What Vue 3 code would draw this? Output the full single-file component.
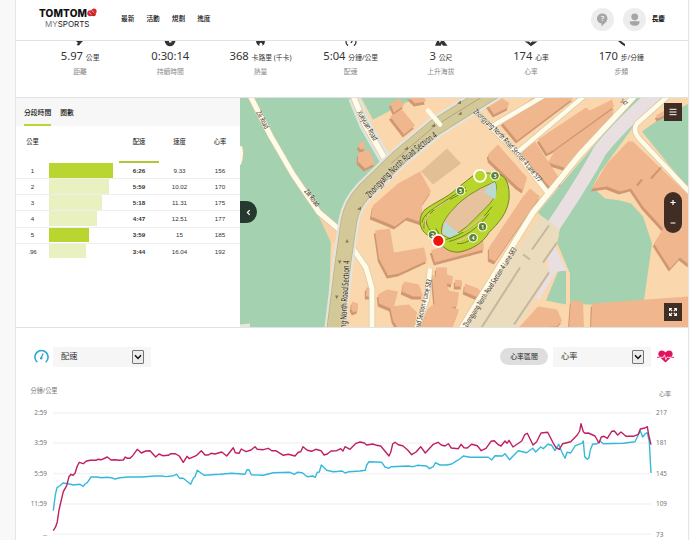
<template>
  <div class="page">
    <div class="sheet">
      <!-- Top bar -->
      <header class="topbar">
        <div class="brand">
          <div class="brand-name">
            <span>TOMTOM</span>
            <svg width="10" height="10" viewBox="0 0 10 10">
              <circle cx="3.3" cy="5.2" r="3" fill="#d92b2e" />
              <circle cx="7" cy="3.2" r="2.7" fill="#d92b2e" />
              <circle cx="6.8" cy="6" r="2.2" fill="#c41f24" />
              <path d="M2.3 4.3 L4.5 6.4 M5 2.6 L7.6 5.2" stroke="#f6c9c9" stroke-width=".8" />
            </svg>
          </div>
          <div class="brand-sub"><span>MY</span>SPORTS</div>
        </div>
        <nav class="menu">
          <a v-for="item in menu" :key="item">{{ item }}</a>
        </nav>
        <div class="account">
          <span class="round">
            <svg width="23" height="23" viewBox="0 0 23 23">
              <path d="M11.5 5.5 a5 5 0 0 1 3.8 8.3 L10.5 18.6 V15.6 A5 5 0 0 1 11.5 5.5z" fill="#a5a5a5" />
              <text x="11.5" y="13.3" text-anchor="middle" font-size="7.5" font-weight="700" fill="#eee">?</text>
            </svg>
          </span>
          <span class="round second">
            <svg width="23" height="23" viewBox="0 0 23 23">
              <circle cx="11.7" cy="8.8" r="3.4" fill="#a5a5a5" />
              <path d="M6.6 13.6 Q11.7 12.2 16.8 13.6 Q16.5 17.8 11.7 17.8 Q6.9 17.8 6.6 13.6z" fill="#a5a5a5" />
            </svg>
          </span>
          <b>長慶</b>
        </div>
      </header>

      <!-- Activity totals -->
      <section class="stats">
        <div v-for="s in stats" :key="s.label + s.value" class="stat">
          <svg width="14" height="6" viewBox="0 0 14 6">
            <path :d="s.icon" :fill="s.line ? 'none' : '#333'" :stroke="s.line ? '#333' : 'none'" stroke-width="1.3" />
          </svg>
          <div class="value">{{ s.value }} <small>{{ s.unit }}</small></div>
          <div class="label">{{ s.label }}</div>
        </div>
      </section>

      <section class="middle">
        <!-- Splits -->
        <div class="splits">
          <div class="tabs">
            <span class="tab active">分段時間</span>
            <span class="tab">圈數</span>
          </div>
          <div class="row head">
            <span class="km">公里</span>
            <span></span>
            <span class="sorted">配速</span>
            <span>速度</span>
            <span>心率</span>
          </div>
          <div v-for="r in splits" :key="r.km" class="row">
            <span>{{ r.km }}</span>
            <span class="track"><i :class="{ strong: r.strong }" :style="{ width: r.width + 'px' }"></i></span>
            <span class="pace">{{ r.pace }}</span>
            <span>{{ r.speed }}</span>
            <span>{{ r.heart }}</span>
          </div>
        </div>

        <!-- Map -->
        <div class="map">
          <svg class="map-art" width="449" height="230" viewBox="240 97.5 449 230">
            <rect x="240" y="97" width="449" height="231" fill="#fbd7ae" />
            <g fill="#a4d1b0">
              <path d="M240 97 H352 L387 160 L356 191 L342 211 L340 224 L331 240 L328 328 H240z" />
              <path d="M361 97 H416 L373 119z" />
              <path d="M634 97 H668 L632 128 L600 172 L565 241 L538 212 Z" />
              <path d="M642 131 L663 116 L689 103 V189z" />
              <path d="M568 205 L592 186 L605 198 L620 200 L631 203 L643 216 L652 243 L643 307 L570 303 L570 273 L557 242z" />
              <path d="M558 271 L566 270 L566 304 L546 300z" />
            </g>
            <path d="M317 212 L338 228 L336 242 L331 242z" fill="#fbd0a5" />
            <path d="M240 324 l10 -1 v5 h-10z" fill="#e6e8dc" />

            <!-- Railway and station -->
            <path d="M659 90 Q618 127 600 150 Q584 180 553 226" fill="none" stroke="#e9dfe1" stroke-width="14" />
            <path d="M546 220 L558 228 L554 244 L567 270 L556 271 L539 300 L535 296 L548 266z" fill="#e9dfe1" />
            <path d="M541 215 L560 229 L557 239 L543 262 L550 269 L530 309 L515 328 H466 L513 255z" fill="#ebdcbd" />
            <path d="M549 225 L532 249 M557 242 L543 262 M523 254 l7 5 M520 267 L481 328 M549 272 L514 324" stroke="#c5b79d" stroke-width="2" fill="none" />

            <!-- Buildings, each over its own shade -->
            <g v-for="(b, i) in buildings" :key="i">
              <polygon :points="b" transform="translate(-1.2 3)" fill="#cf9872" />
              <polygon :points="b" fill="#f0b68d" />
            </g>
            <path d="M661 167 l-10 11 M642 179 l-5 6" stroke="#cd9871" stroke-width="2" fill="none" />
            <path d="M447 148 L461 163 L433 184 L421 171z" fill="#e3bf96" />

            <!-- Streets -->
            <g fill="none" stroke-linejoin="round" stroke-linecap="butt">
              <path d="M354 97 L365 124 L387 162" stroke="#dfe4dc" stroke-width="12" />
              <path v-for="(s, i) in streets" :key="'c' + i" :d="s.d" stroke="#d8c7a5" :stroke-width="s.w + 1.4" />
              <path v-for="(s, i) in streets" :key="'s' + i" :d="s.d" stroke="#fffbe9" :stroke-width="s.w" />
              <path :d="mainRoad" stroke="#e4e4dc" stroke-width="21" />
              <path :d="mainRoad" stroke="#bdb184" stroke-width="16.5" />
              <path :d="mainRoad" stroke="#d2c898" stroke-width="15" />
              <path d="M481 97 L434 126 L391 163" stroke="#b3a779" stroke-width="1" />
              <path d="M428 110 L440 124" stroke="#fffbe9" stroke-width="4.5" stroke-linecap="round" />
            </g>
            <g fill="#807a56">
              <path d="M457 103 l4 -3 v3.6z M458 114 l3.6 -3 v3.6z M431 126 l4 -3 v3.6z M404 149 l4 -3 v3.6z M357 209 l4 -3 v3.6z M345.5 242 l1.6 -3.6 1.6 3.6z M338 260 h3.4 l-1.7 3.4z M335 295 h3.4 l-1.7 3.4z" />
            </g>

            <!-- Stadium -->
            <path d="M472 176 C479 170 486 173 496 173 C507 174 510 186 509 199 C507 213 499 222 489 232 C482 244 470 249 462 251 C454 253 447 250 442 245 L428 235 C420 230 417 219 424 210 C432 203 448 197 457 188z" fill="#b8d52b" stroke="#687c20" stroke-width=".9" />
            <path d="M495 181 C499 190 495 198 487 206 L467 226 L450 238 L442 234 C440 227 444 219 451 211 Q464 194 495 181z" fill="#e6c29d" stroke="#687c20" stroke-width=".8" />
            <path d="M495 181.5 Q488 184 484 192 L495 199 Q498 190 495 181.5z M444 221 L459 233 L450 237.5 L442.5 233.5z" fill="#b9dbd1" />
            <path d="M422 222 C423 213 436 207 452 196 L466 187 M424 228 C423 218 432 209 450 199 L467 190 M446 239 C462 235 482 221 492 206 M449 241 C464 237 478 228 489 213 M427 215 C425 222 427 228 434 233 M457 243 C464 244 470 240 477 234 M436 228 Q440 233 439 238" fill="none" stroke="#5b6f1d" stroke-width=".8" />
            <path d="M430 213 Q422 221 427 228 M434 209 Q441 204 450 199 M457 240.5 Q464 239 470 234 M463 231.5 Q474 225 484 215" fill="none" stroke="#e2c790" stroke-width="1.4" />

            <!-- Street names -->
            <g class="names">
              <path id="name-main" d="M370 198 Q397 165 439 135" fill="none" />
              <text font-size="9.5"><textPath href="#name-main" textLength="92" lengthAdjust="spacingAndGlyphs">Zhongyang North Road Section 4</textPath></text>
              <path id="name-577" d="M473 112 Q506 140 540 184" fill="none" />
              <text font-size="7.5"><textPath href="#name-577" textLength="96" lengthAdjust="spacingAndGlyphs">Zhongyang North Road Section 4 Lane 577</textPath></text>
              <text transform="translate(467 327.5) rotate(-57.5)" font-size="7.5" textLength="93" lengthAdjust="spacingAndGlyphs">Zhongyang North Road Section 4 Lane 583</text>
              <text transform="translate(419.5 329) rotate(-76)" font-size="7.2" textLength="51" lengthAdjust="spacingAndGlyphs">oad Section 4 Lane 583</text>
              <text transform="translate(346 328) rotate(-87)" font-size="9" textLength="68" lengthAdjust="spacingAndGlyphs">ng North Road Section 4</text>
              <text transform="translate(357 112) rotate(60)" font-size="7.5" textLength="33" lengthAdjust="spacingAndGlyphs">Xueyuan Road</text>
              <text transform="translate(256 112) rotate(62)" font-size="7.5" textLength="19" lengthAdjust="spacingAndGlyphs">Zili Road</text>
              <text transform="translate(304 191) rotate(52)" font-size="7.5" textLength="20" lengthAdjust="spacingAndGlyphs">Zili Road</text>
              <text transform="translate(620 101) rotate(40)" font-size="6" textLength="7" lengthAdjust="spacingAndGlyphs">547</text>
            </g>

            <!-- Kilometre marks, start and finish -->
            <g v-for="m in marks" :key="m.n">
              <circle :cx="m.x" :cy="m.y" r="4.3" fill="#51792b" stroke="#f7faea" stroke-width="1.2" />
              <circle :cx="m.x" :cy="m.y" r="3.1" fill="none" stroke="#7d9b55" stroke-width=".5" />
              <text :x="m.x" :y="m.y + 2" text-anchor="middle" font-size="5.5" font-weight="700" fill="#fff">{{ m.n }}</text>
            </g>
            <circle cx="480" cy="175.3" r="6" fill="#b8d52b" stroke="#fff" stroke-width="1.8" />
            <circle cx="438.3" cy="240.3" r="6" fill="#f01408" stroke="#fff" stroke-width="1.8" />
          </svg>
          <div class="collapse">
            <svg width="5" height="7" viewBox="0 0 5 7"><path d="M3.7 1.2 L1.4 3.5 L3.7 5.8" stroke="#fff" stroke-width="1.2" fill="none" /></svg>
          </div>
          <div class="square layers">
            <svg width="8" height="8" viewBox="0 0 8 8"><path d="M.5 1.3 H7.5 M.5 4 H7.5 M.5 6.7 H7.5" stroke="#fff" stroke-width="1" /></svg>
          </div>
          <div class="zoom">
            <svg width="18" height="42" viewBox="0 0 18 42"><path d="M6.4 10.5 H11.6 M9 7.9 V13.1 M6.6 31 H11.4" stroke="#fff" stroke-width="1.2" /></svg>
          </div>
          <div class="square expand">
            <svg width="8" height="8" viewBox="0 0 8 8" fill="none" stroke="#fff" stroke-width="1.1">
              <path d="M.6 2.9 V.6 H2.9 M.8 .8 L3.2 3.2 M5.1 .6 H7.4 V2.9 M7.2 .8 L4.8 3.2 M.6 5.1 V7.4 H2.9 M.8 7.2 L3.2 4.8 M7.4 5.1 V7.4 H5.1 M7.2 7.2 L4.8 4.8" />
            </svg>
          </div>
        </div>
      </section>

      <!-- Pace and heart rate chart -->
      <section class="chart">
        <div class="controls">
          <svg width="15" height="15" viewBox="0 0 15 15" fill="none" stroke="#28a9cc">
            <path d="M3.3 13.2 A6.6 6.6 0 1 1 11.7 13.2" stroke-width="1.6" />
            <path d="M7.3 9 L9 4.6" stroke-width="1.3" />
            <circle cx="7.2" cy="9.2" r="1.2" fill="#28a9cc" stroke="none" />
          </svg>
          <div class="select">
            <span>配速</span>
            <i class="arrow"><svg width="8" height="6" viewBox="0 0 8 6"><path d="M1 1.3 L4 4.4 L7 1.3" fill="none" stroke="#111" stroke-width="1.5" /></svg></i>
          </div>
          <span class="pill">心率區間</span>
          <div class="select right">
            <span>心率</span>
            <i class="arrow"><svg width="8" height="6" viewBox="0 0 8 6"><path d="M1 1.3 L4 4.4 L7 1.3" fill="none" stroke="#111" stroke-width="1.5" /></svg></i>
          </div>
          <svg class="heart" width="17" height="13" viewBox="0 0 17 13">
            <path d="M8.5 12.6 L2.3 6.8 C.2 3.8 1.8 .6 4.8 .6 C6.6 .6 7.8 1.6 8.5 2.6 C9.2 1.6 10.4 .6 12.2 .6 C15.2 .6 16.8 3.8 14.7 6.8z" fill="#e2125f" />
            <path d="M2 7.3 H6.4 L7.5 4.8 L8.8 9.6 L10 7.3 H15" fill="none" stroke="#fff" stroke-width=".8" />
            <path d="M0 7.3 H2.6 M14.4 7.3 H17" stroke="#e2125f" stroke-width=".9" />
          </svg>
        </div>
        <svg class="plot" width="672" height="160" viewBox="16 380 672 160">
          <g v-for="g in grid" :key="g.y">
            <line x1="53" x2="651" :y1="g.y" :y2="g.y" stroke="#f3f3f3" stroke-width="1.4" />
            <text x="47" :y="g.y + 2.2" text-anchor="end">{{ g.left }}</text>
            <text x="656" :y="g.y + 2.2">{{ g.right }}</text>
          </g>
          <text x="30.5" y="393.3" textLength="27" lengthAdjust="spacingAndGlyphs">分鐘/公里</text>
          <text x="659" y="396" class="unit">心率</text>
          <polyline :points="pace" fill="none" stroke="#35b9da" stroke-width="1.4" stroke-linejoin="round" />
          <polyline :points="heart" fill="none" stroke="#bf1f62" stroke-width="1.4" stroke-linejoin="round" />
        </svg>
      </section>
    </div>
  </div>
</template>

<script setup>
const menu = ['最新', '活動', '規劃', '進度']

const stats = [
  { value: '5.97', unit: '公里', label: '距離', icon: 'M3 0 H10 L8 2 L6 4.5 L3.5 4 L5 2z' },
  { value: '0:30:14', unit: '', label: '持續時間', icon: 'M1.5 0 H12.5 Q11 5.3 7 5.3 Q3 5.3 1.5 0z M6 0 v1.5 h2.5 v-1.5z' },
  { value: '368', unit: '卡路里 (千卡)', label: '熱量', icon: 'M3 0 H12 Q12 3 9.5 5 Q10 2.5 7.5 1.5 Q5.5 3 6.5 5 Q3.5 4 3 0z' },
  { value: '5:04', unit: '分鐘/公里', label: '配速', icon: 'M2.2 0 Q1.5 3 4 4.6 M11.8 0 Q12.5 3 10 4.6 M7 2 L8.2 0', line: true },
  { value: '3', unit: '公尺', label: '上升海拔', icon: 'M3 0 H5 L5.8 2 L7 0 H10 L13.5 4.7 H9 L7.5 2.5 L7 4.7 H1z' },
  { value: '174', unit: '心率', label: '心率', icon: 'M.5 .5 H5 L6.5 2 L8 .5 H13.5 L7 5.2 L3 2z' },
  { value: '170', unit: '步/分鐘', label: '步頻', icon: 'M4 0 H7 L11 3 V5.3 L8 3.5z' },
]

const splits = [
  { km: '1', width: 64, pace: '6:26', speed: '9.33', heart: '156', strong: true },
  { km: '2', width: 60, pace: '5:59', speed: '10.02', heart: '170' },
  { km: '3', width: 53, pace: '5:18', speed: '11.31', heart: '175' },
  { km: '4', width: 48, pace: '4:47', speed: '12.51', heart: '177' },
  { km: '5', width: 40, pace: '3:59', speed: '15', heart: '185', strong: true },
  { km: '.96', width: 37, pace: '3:44', speed: '16.04', heart: '192' },
]

const mainRoad = 'M496 89 L467 107 L435 127 L400 156 L364 191 Q352 204 349 220 L343 262 L334 335'

const streets = [
  { w: 5, d: 'M250 95 L271 136 L293 174 L319 212 L338 228 L353 248 L366 267 L372 288 V330' },
  { w: 5.5, d: 'M353 95 L365 124 L387 162' },
  { w: 3.5, d: 'M240 146 Q243 153 239 164' },
  { w: 4.5, d: 'M471 106 L518 154 L549 194' },
  { w: 4.5, d: 'M490 127 L546 94' },
  { w: 4.5, d: 'M516 153 L586 94' },
  { w: 5.5, d: 'M635 95 L580 154 L533 212 L460 330' },
  { w: 4.5, d: 'M672 92 L637 123 Q632 130 640 139 L690 192' },
  { w: 4.5, d: 'M430 268 L427 298 L416 330' },
]

const buildings = [
  '390,103 400,98 404,105 394,112',
  '408,96 424,96 426,101 415,103',
  '390,116 402,109 415,125 404,134',
  '361,140 365,143 365,148 361,149 358,146',
  '358,153 369,149 375,163 365,168 358,161',
  '487,104 499,96 509,102 508,107 494,114',
  '502,122 533,97 574,97 517,140',
  '538,139 586,107 590,110 612,99 614,106 553,150 547,153',
  '555,150 614,108 613,113 567,168 548,162',
  '520,153 535,141 562,182 552,189',
  '488,154 498,144 527,177 523,190 517,186 489,159',
  '530,188 540,196 495,261 489,258 489,247 523,196',
  '398,183 420,171 431,191 422,204 422,222 407,217 395,226 386,222 371,216 373,205',
  '375,230 390,228 394,252 424,247 427,260 399,273 388,275 379,258',
  '431,250 461,240 483,235 484,249 435,262',
  '436,267 447,267 447,274 453,276 452,284 436,281',
  '455,279 462,280 462,286 455,286',
  '404,281 419,284 423,296 413,296 402,291',
  '387,289 398,291 393,309 379,303 378,294',
  '366,287 371,287 371,296 366,296',
  '352,301 358,303 358,310 353,312 351,308',
  '390,306 409,304 417,312 414,328 398,328 393,320',
  '432,274 446,281 449,290 459,292 457,306 435,309',
  '436,302 459,309 452,328 420,328 428,308',
  '465,283 478,288 482,293 478,297 464,291',
  '538,306 557,309 562,320 557,326 518,328',
  '571,300 583,301 584,328 569,328',
  '592,303 689,296 689,329 591,329',
  '628,141 633,141 689,195 689,264 680,257 670,268 654,243 663,228 643,206 631,188 620,191 607,186 592,188 607,163',
  '656,115 668,108 668,113 658,118',
]

const marks = [
  { n: 1, x: 482.5, y: 226.2 },
  { n: 3, x: 495, y: 175.3 },
  { n: 4, x: 473, y: 237.3 },
  { n: 5, x: 460.5, y: 190.2 },
  { n: 2, x: 432.5, y: 234.3 },
]

const grid = [
  { y: 413, left: '2:59', right: '217' },
  { y: 443, left: '3:59', right: '181' },
  { y: 473.5, left: '5:59', right: '145' },
  { y: 504, left: '11:59', right: '109' },
  { y: 534.3, left: '--', right: '73' },
]

const heart =
  '53.3,530.7 55.7,526.7 57.3,521.7 59,510 63.3,491.7 66.7,485.7 69,476.7 71,474.3 73,475.3 75,473.3 77.3,466 79.3,462.3 83.3,463.7 86,461.3 90,460.3 96,460.3 97.7,459.3 101.7,459.7 107.3,457 111,460 115,459.7 119,460.3 123.3,460 125.3,457 127.3,458.3 130,458.3 132.7,455.7 137.3,449.3 141.3,453 145.7,451 150,450.7 155.7,457 159,454 162.7,455.7 168.3,455.3 171,453.7 175,453.7 179.3,456 183.3,462.3 187,456.3 189.3,458.7 196.7,455.3 201.3,450.7 205,455 208.3,455 211,453.3 215,454 221.7,452 226.7,456 233.3,447.7 235.3,452.7 239,453.3 241.3,449 246,451.7 251,450 255,446.7 257.3,449.3 263.3,449.7 268.3,448.3 271.7,450.7 275.7,450.7 283.3,455.3 288.3,454.3 295,456 298.3,452.3 300.7,451.7 303,446.7 307.3,450.3 311.7,451.3 315.7,449.3 321,450.7 324,455 327.3,454 331,451 336.7,450.7 340.7,448.7 343,451 345,446.7 350,449.3 356,443.3 360,442 364.3,443 366.7,445 372.7,444 376.7,445.3 380.7,446 389,456 390.7,452.3 392.7,444 395,442.3 398.3,444.7 402.7,445.7 407.7,450 411.7,454.7 416,452 420.7,446.7 425.3,453 433.3,444.3 438,442.3 441.3,445 445,446 448.3,443.7 451.3,448 458.3,448.7 461,444.3 464,447.7 467.3,448 471.7,444.3 477.3,445.7 481.3,450.7 486,448.3 491,441.3 494.3,440.7 498.3,444.7 501,446 505,441 507,443.3 509,440.3 513,447 521.7,441 525,434.3 527.3,433.3 533,445 536.7,441.7 541,433 547.7,432.3 553.3,443.3 556,447.7 559.3,449.3 562.7,443.7 570.7,441.7 577.3,435 579.7,431 581,423.7 583.3,431.7 585,433.3 588.3,433 595,436 599,443 601.3,437 604,436.3 607.3,438.3 611.7,431.3 614.3,431 617.7,435 621,432 626,436.3 633.3,436.3 638.3,434.3 640.3,429 645,428 647.3,426.7 648.7,435 651,444.7'

const pace =
  '53.3,510.7 55.3,495 57,487.7 59.7,486 63,483 68.3,483.7 73.3,485 80,484.3 83.3,486.3 85,484 87.3,482.7 91,477 96.7,477 101.7,477.7 106.7,477.3 111,477.7 115,479 120,477.7 128.3,477 141.7,477 155,476 161.7,476 166,476.6 173.3,475.7 176.7,474.3 179.7,478.3 183.3,478.3 190.7,484.3 193.3,478.3 195,476.7 197.3,470.3 204,475.3 220,474.3 231.7,473.3 245,474.3 247,469.7 249,469.7 251.3,474.7 263.3,475.3 273.3,472.7 290,472.3 294.3,474.3 297.3,472.3 302.3,472.7 307.3,476.7 312.7,476 315.3,477.3 317.3,472.3 319.3,472 321.3,465 326.7,470.3 333.3,471.7 342.3,471 345,473 349,471.7 360,471 365.3,470.3 366.7,465 369,461.7 381.7,462.3 385,467 389,468.3 391,466.7 408.3,466 412.7,466.7 417.3,465.3 426.7,466 429.3,468.7 433.3,466.7 435.3,462.7 440,465 446.7,465 451.7,464 455.3,461.7 459.7,459 463.3,456 470,457.3 488.3,457.3 491.7,460 495,455.7 502.3,456 505,453.7 509.7,459.7 513.3,455.7 518.3,450.7 526.7,452.7 532.7,448.3 535.7,452 540.7,447 543.3,448.7 547.7,444.3 551.7,445.3 555,450.7 558.7,444.3 561.7,451.7 565,458.3 567,452.3 570.7,453 575.3,445.7 581.7,443.3 583.3,441 584.7,456.7 587.3,459.3 589,457.7 590.3,450 592.7,444 596.7,444 600,441 603.3,443.7 623.3,443.3 635,441.7 640.3,430.7 642.7,437 645,434 647.3,432.7 649.3,441.7 651,473'
</script>

<style>
body {
  background: #f8f8f8;
}
</style>

<style scoped>
.page {
  width: 690px;
  height: 540px;
  overflow: hidden;
  background: #f8f8f8;
  font-family: "Noto Sans", "Noto Sans CJK TC", sans-serif;
  color: #333;
}

.sheet {
  box-sizing: border-box;
  width: 674px;
  height: 540px;
  margin-left: 15px;
  background: #fff;
  border-left: 1px solid #e6e6e6;
  border-right: 1px solid #e6e6e6;
}

/* Top bar */
.topbar {
  box-sizing: border-box;
  height: 41px;
  display: flex;
  align-items: center;
  padding: 0 23px;
  border-bottom: 1px solid #e2e2e2;
}

.brand {
  width: 58px;
  margin-top: -4px;
}

.brand-name {
  display: flex;
  align-items: center;
  height: 11px;
  color: #111;
  font: 800 10px/11px Inter, sans-serif;
  letter-spacing: 0.15px;
}

.brand-sub {
  margin: 0 0 0 6px;
  font: 8px/10px Inter, sans-serif;
  color: #222;
}

.brand-sub span {
  color: #777;
}

.menu {
  display: flex;
  gap: 12px;
  margin-left: 24px;
  margin-top: -3px;
  font-size: 6.7px;
  font-weight: 500;
  line-height: 10px;
  color: #111;
}

.menu a {
  width: 13.4px;
}

.account {
  display: flex;
  align-items: center;
  margin-left: auto;
  margin-top: -2px;
}

.account b {
  margin-left: 6px;
  font-size: 6.7px;
  line-height: 10px;
  color: #111;
}

.round {
  width: 23px;
  height: 23px;
  border-radius: 50%;
  background: #ededee;
}

.round.second {
  margin-left: 9px;
}

.round svg {
  display: block;
}

/* Stats */
.stats {
  box-sizing: border-box;
  height: 57px;
  display: grid;
  grid-template-columns: repeat(7, 90.2px);
  padding-left: 19px;
  border-bottom: 1px solid #e2e2e2;
}

.stat {
  text-align: center;
  white-space: nowrap;
}

.stat svg {
  display: block;
  margin: 0 auto 0;
}

.value {
  height: 17px;
  font-size: 11.2px;
  line-height: 17px;
  color: #333;
}

.value small {
  font-size: 6.8px;
}

.label {
  margin-top: 3px;
  font-size: 6.8px;
  line-height: 10px;
  color: #888;
}

/* Splits */
.middle {
  display: flex;
  height: 229px;
  border-bottom: 1px solid #e2e2e2;
}

.splits {
  width: 224px;
}

.tabs {
  box-sizing: border-box;
  height: 28px;
  display: flex;
  gap: 9px;
  padding-left: 8px;
  background: #f7f7f7;
}

.tab {
  box-sizing: border-box;
  height: 28px;
  padding-top: 9px;
  font-size: 6.8px;
  font-weight: 500;
  line-height: 11px;
  color: #111;
}

.tab.active {
  border-bottom: 2px solid #b9d532;
}

.row {
  box-sizing: border-box;
  height: 16.15px;
  display: grid;
  grid-template-columns: 33px 70px 40px 41px 40px;
  align-items: center;
  text-align: center;
  border-bottom: 1px solid #eee;
  font: 6.2px/8px "Liberation Sans", "Noto Sans CJK TC", sans-serif;
  color: #333;
}

.row.head {
  height: 37px;
  align-items: stretch;
  border-bottom: 0;
  font-size: 6.3px;
  color: #111;
}

.head span {
  padding-top: 12px;
}

.head .sorted {
  border-bottom: 2px solid #b0c933;
}

.row:last-child {
  border-bottom: 0;
}

.track {
  align-self: stretch;
}

.track i {
  display: block;
  height: 14.7px;
  background: #e9f1c1;
}

.track i.strong {
  background: #b9d52f;
}

.pace {
  font-weight: 700;
}

/* Map */
.map {
  position: relative;
  width: 448px;
  height: 229px;
  overflow: hidden;
}

.map-art {
  display: block;
}

.names text {
  font-family: "Noto Sans", sans-serif;
  fill: #29241e;
  paint-order: stroke;
  stroke: rgba(255, 248, 230, 0.6);
  stroke-width: 1px;
}

.collapse {
  position: absolute;
  left: 0;
  top: 103px;
  width: 17px;
  height: 22px;
  border-radius: 0 11px 11px 0;
  background: #25392f;
  display: flex;
  align-items: center;
  justify-content: center;
}

.square {
  position: absolute;
  right: 6px;
  width: 18px;
  height: 18px;
  background: #402e25;
  display: flex;
  align-items: center;
  justify-content: center;
}

.layers {
  top: 5px;
}

.expand {
  bottom: 6px;
}

.zoom {
  position: absolute;
  right: 6px;
  top: 94px;
  width: 18px;
  height: 41px;
  border-radius: 9px;
  background: #402e25;
}

/* Chart */
.controls {
  height: 52px;
  display: flex;
  align-items: center;
  padding: 5px 14px 0 18px;
  box-sizing: border-box;
}

.select {
  box-sizing: border-box;
  width: 98px;
  height: 20px;
  margin-left: 4px;
  padding: 0 7px 0 8px;
  display: flex;
  align-items: center;
  justify-content: space-between;
  background: #f6f6f6;
  font-size: 8.2px;
  line-height: 12px;
  color: #333;
}

.select span {
  margin-top: -2px;
}

.arrow {
  box-sizing: border-box;
  width: 12px;
  height: 14px;
  border: 1px solid #777;
  border-radius: 1px;
  background: #ececec;
  display: flex;
  align-items: center;
  justify-content: center;
}

.pill {
  width: 48px;
  height: 17px;
  margin-left: auto;
  border-radius: 9px;
  background: #dedede;
  font-size: 6.9px;
  line-height: 17px;
  text-align: center;
  color: #222;
}

.select.right {
  margin-left: 5px;
}

.heart {
  margin-left: 6px;
}

.plot {
  display: block;
}

.plot text {
  font-size: 6.4px;
  fill: #777;
}

.plot .unit {
  font-size: 6px;
}
</style>
